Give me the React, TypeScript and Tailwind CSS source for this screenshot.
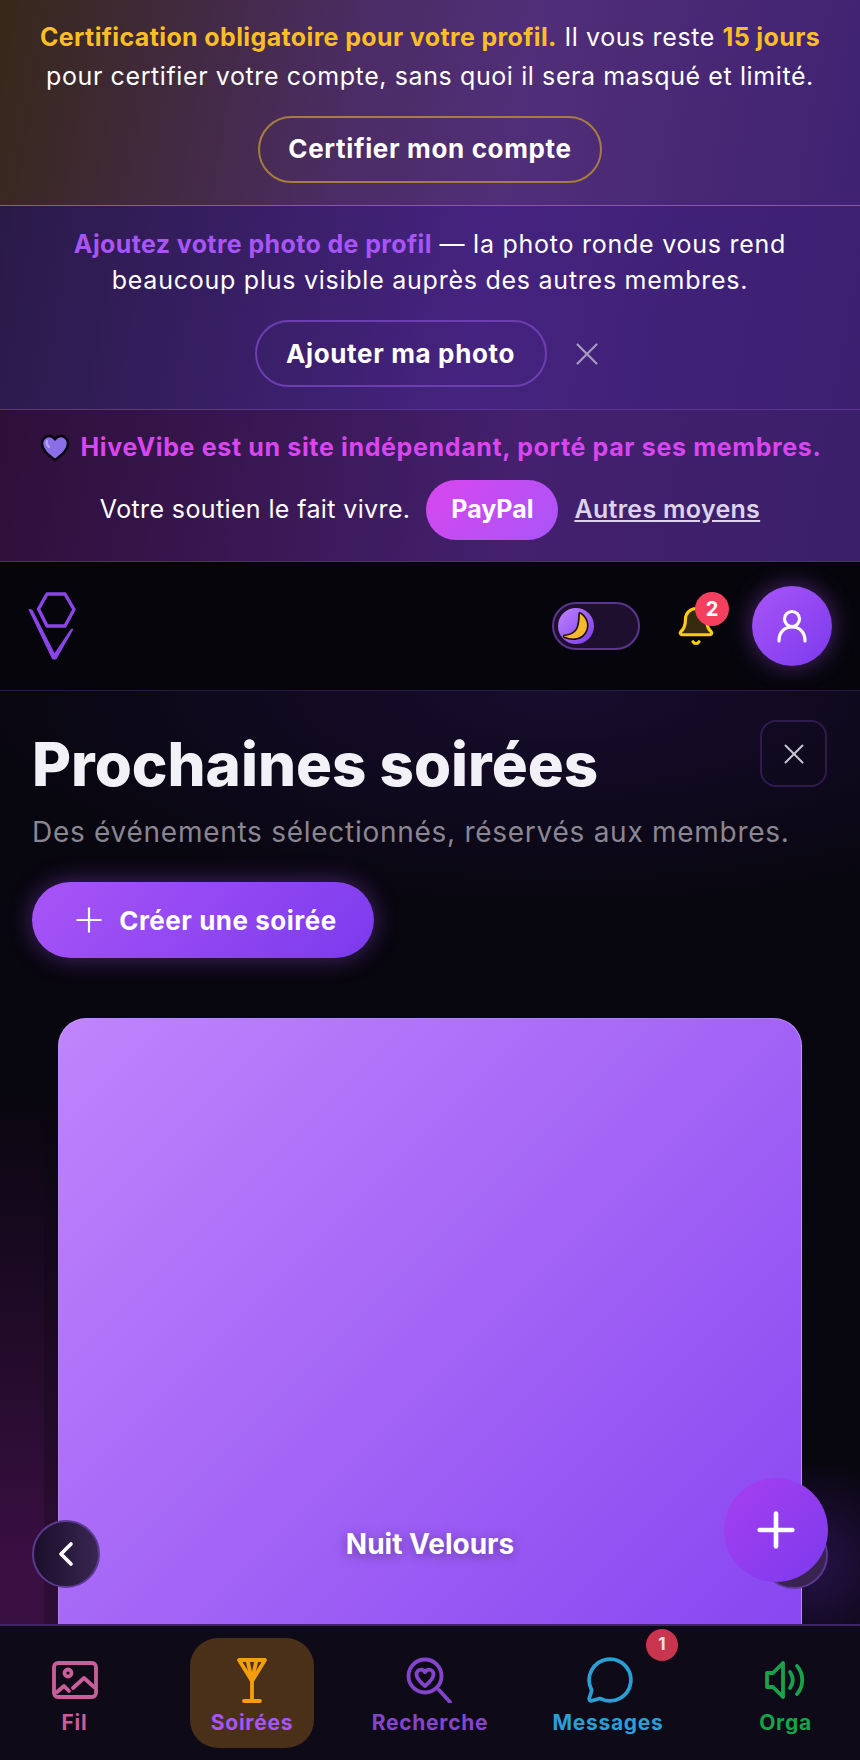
import { Bell, ChevronLeft, MessageCircle, Plus, X } from 'lucide-react';

const FONT = "font-['Inter',sans-serif]";

function Logo() {
  return (
    <svg width="52" height="72" viewBox="0 0 52 72" fill="none" aria-hidden="true">
      <path d="M10.500 19 19 4h18l9 15.500L37 36H19z" stroke="#8b45ea" strokeWidth="3.400" strokeLinejoin="round" />
      <path d="M1 19.500 4 20 26.500 64 43 39.500 45 39 28 69h-3.400z" fill="#8b45ea" stroke="#8b45ea" strokeLinejoin="round" />
    </svg>
  );
}

function Heart() {
  return (
    <svg width="30" height="28" viewBox="0 0 30 28" aria-hidden="true">
      <path
        d="M15 26C7 20 2 15.500 2 9.500 2 5 5.500 2 9 2c2.700 0 4.800 1.400 6 3.500C16.200 3.400 18.300 2 21 2c3.500 0 7 3 7 7.500 0 6-5 10.500-13 16.500z"
        fill="#8a6ee8"
        stroke="#0a0610"
        strokeWidth="2.500"
        strokeLinejoin="round"
      />
      <path d="M7 7c-1 2 0 4 2 6" stroke="#b7a5f5" strokeWidth="2.200" fill="none" strokeLinecap="round" />
    </svg>
  );
}

function Moon() {
  return (
    <svg width="30" height="30" viewBox="0 0 24 24" aria-hidden="true">
      <path
        d="M15.500 1.500c5.500 3.500 7.500 10 4.500 15.500-3 5.300-10 7.200-17.500 4-.8-.4-.5-1.400.4-1.600 4-.3 7.300-1.500 9.300-4.700 2-3.200 2.200-7.500 2.300-12.300.1-.9.500-1.200 1-.9z"
        fill="#f5b82e"
        stroke="#1a0e06"
        strokeWidth="1.300"
        strokeLinejoin="round"
      />
    </svg>
  );
}

function UserIcon() {
  return (
    <svg width="32" height="34" viewBox="0 0 32 34" fill="none" stroke="white" strokeWidth="3.200" strokeLinecap="round" aria-hidden="true">
      <circle cx="16" cy="10" r="7.500" />
      <path d="M3 32c0-9 5.500-14 13-14s13 5 13 14" />
    </svg>
  );
}

function PhotoIcon() {
  return (
    <svg width="46" height="38" viewBox="0 0 46 38" fill="none" stroke="#c85f9a" strokeWidth="3.800" strokeLinecap="round" strokeLinejoin="round" aria-hidden="true">
      <rect x="2" y="2" width="42" height="34" rx="4" />
      <circle cx="16" cy="12" r="3.500" />
      <path d="M5 31l7-6 5 5M21 27l11-10 10 9" />
    </svg>
  );
}

function GlassIcon() {
  return (
    <svg width="32" height="46" viewBox="0 0 32 46" fill="none" stroke="#f59e0b" strokeWidth="3.800" strokeLinecap="round" strokeLinejoin="round" aria-hidden="true">
      <path d="M3 3h26L16 24z" />
      <path d="M11.500 3 16 24l4.500-21M16 24v20M8 44h16" />
    </svg>
  );
}

function HeartSearchIcon() {
  return (
    <svg width="48" height="46" viewBox="0 0 48 46" fill="none" stroke="#8544cc" strokeWidth="3.800" strokeLinecap="round" strokeLinejoin="round" aria-hidden="true">
      <circle cx="19" cy="19" r="16.500" />
      <path d="M19 29c-5.500-4.500-8.500-7.500-8.500-11.500 0-3 2.200-4.800 4.500-4.800 1.800 0 3.100 1 4 2.400.9-1.400 2.200-2.400 4-2.400 2.300 0 4.500 1.800 4.500 4.800 0 4-3 7-8.500 11.500z" />
      <path d="M33 33l11 12" />
    </svg>
  );
}

function SpeakerIcon() {
  return (
    <svg width="44" height="38" viewBox="0 0 44 38" fill="none" stroke="#16a34a" strokeWidth="3.800" strokeLinecap="round" strokeLinejoin="round" aria-hidden="true">
      <path d="M19 2v34L9 26H3V12h6z" />
      <path d="M26 11c3.500 5 3.500 11 0 16" />
      <path d="M33 5c7 8 7 20 0 28" />
    </svg>
  );
}

type NavItem = { label: string; color: string; icon: React.ReactNode };

const NAV_ITEMS: NavItem[] = [
  { label: 'Fil', color: 'text-[#c85f9a]', icon: <PhotoIcon /> },
  { label: 'Soirées', color: 'text-[#a855f7]', icon: <GlassIcon /> },
  { label: 'Recherche', color: 'text-[#8544cc]', icon: <HeartSearchIcon /> },
  {
    label: 'Messages',
    color: 'text-[#2a9fd6]',
    icon: <MessageCircle size={50} strokeWidth={1.800} color="#2a9fd6" className="ml-[4px]" />,
  },
  { label: 'Orga', color: 'text-[#16a34a]', icon: <SpeakerIcon /> },
];

export default function App() {
  return (
    <div className={`relative flex h-[1760px] w-[860px] flex-col overflow-hidden bg-[#07060d] text-white ${FONT}`}>
      <section className="flex h-[206px] flex-col items-center border-b border-[#8f6a3e] bg-[linear-gradient(100deg,#372819_0%,#4c2c66_42%,#512e78_60%,#3f2272_100%)] pt-[18px] text-center text-[25px] leading-[38.500px] tracking-[0.024em]">
        <p>
          <strong className="font-bold tracking-[0.015em] text-[#fbbf24]">Certification obligatoire pour votre profil.</strong> Il vous reste{' '}
          <strong className="font-bold tracking-[0.015em] text-[#fbbf24]">15 jours</strong>
          <br />
          pour certifier votre compte, sans quoi il sera masqué et limité.
        </p>
        <button className="mt-[21px] h-[67px] w-[344px] rounded-full border-2 border-[#a67c3f] text-[26px] font-bold tracking-[0.025em]">
          Certifier mon compte
        </button>
      </section>

      <section className="flex h-[204px] flex-col items-center border-b border-[#5c3496] bg-[linear-gradient(100deg,#2a1a48_0%,#452380_55%,#3b2070_100%)] pt-[20px] text-center text-[25px] leading-[36px] tracking-[0.03em]">
        <p>
          <strong className="font-bold tracking-[0.015em] text-[#a855f7]">Ajoutez votre photo de profil</strong> — la photo ronde vous rend
          <br />
          beaucoup plus visible auprès des autres membres.
        </p>
        <div className="mt-[22px] flex items-center gap-[21px]">
          <button className="h-[67px] w-[292px] rounded-full border-2 border-[#6d3eb0] text-[26px] font-bold tracking-[0.025em]">
            Ajouter ma photo
          </button>
          <X size={38} strokeWidth={1.400} className="text-[#a79abf]" />
        </div>
      </section>

      <section className="flex h-[152px] flex-col items-center border-b border-[#5e2480] bg-[linear-gradient(100deg,#2e0f38_0%,#44206e_60%,#3a1f6a_100%)] pt-[19px] text-[25px]">
        <div className="flex items-center gap-[10px] pl-[2px]">
          <Heart />
          <span className="font-bold tracking-[0.026em] text-[#d946ef]">HiveVibe est un site indépendant, porté par ses membres.</span>
        </div>
        <div className="mt-[13px] flex items-center">
          <span className="tracking-[0.015em]">Votre soutien le fait vivre.</span>
          <button className="ml-[16px] h-[60px] w-[132px] rounded-full bg-[linear-gradient(135deg,#d946ef,#a855f7)] font-bold">PayPal</button>
          <a className="ml-[16px] font-semibold tracking-[0.012em] text-[#ddd3ea] underline">Autres moyens</a>
        </div>
      </section>

      <header className="flex h-[129px] items-center justify-between border-b border-[#2a1a48] bg-[#06050b] pl-[28px] pr-[28px]">
        <Logo />
        <div className="flex items-center">
          <div className="flex h-[48px] w-[88px] items-center rounded-full border-2 border-[#5b3490] bg-[#1f0f2e] pl-[4px]">
            <span className="flex h-[36px] w-[36px] items-center justify-center rounded-full bg-[linear-gradient(135deg,#c084fc,#7c3aed)]">
              <Moon />
            </span>
          </div>
          <div className="relative ml-[35px] mr-[35px]">
            <Bell size={42} strokeWidth={1.800} className="fill-[#fbbf24]/20 text-[#facc15]" />
            <span className="absolute left-[20px] top-[-13px] flex h-[34px] w-[34px] items-center justify-center rounded-full bg-[#f43f5e] text-[20px] font-bold">
              2
            </span>
          </div>
          <div className="flex h-[80px] w-[80px] items-center justify-center rounded-full bg-[linear-gradient(135deg,#a855f7,#7c3aed)] shadow-[0_0_24px_rgba(168,85,247,0.45)]">
            <UserIcon />
          </div>
        </div>
      </header>

      <main className="relative flex-1 overflow-hidden bg-[radial-gradient(ellipse_70%_220px_at_65%_0%,#170d2e_0%,#08060f_100%)]">
        <div className="absolute bottom-0 left-0 top-[400px] w-[58px] bg-[linear-gradient(180deg,transparent,#3a0f42_90%)]">
          <div className="ml-[44px] h-full w-[14px] bg-[#07060d]/25" />
        </div>
        <div className="absolute bottom-[-40px] right-0 h-[200px] w-[160px] bg-[radial-gradient(circle_at_70%_50%,#261248_0%,transparent_70%)]" />

        <div className="relative px-[32px] pt-[29px]">
          <button className="absolute right-[33px] top-[29px] flex h-[67px] w-[67px] items-center justify-center rounded-[16px] border-2 border-[#2f1b4d]">
            <X size={34} strokeWidth={1.400} className="text-[#c9c4d3]" />
          </button>
          <h1 className="text-[60px] font-extrabold leading-[88px] text-[#f3f1f8]">Prochaines soirées</h1>
          <p className="mt-[2px] text-[28px] leading-[44px] tracking-[0.026em] text-[#8a8692]">
            Des événements sélectionnés, réservés aux membres.
          </p>
          <button className="mt-[28px] flex h-[76px] w-[342px] items-center justify-center gap-[10px] rounded-full bg-[linear-gradient(135deg,#a855f7,#7c3aed)] text-[26px] font-bold tracking-[0.02em] shadow-[0_0_24px_rgba(168,85,247,0.4)]">
            <Plus size={40} strokeWidth={1.300} />
            Créer une soirée
          </button>
        </div>

        <div className="relative mx-[58px] mt-[60px] flex h-[680px] items-start justify-center rounded-[28px] border border-[#c9a5fb]/60 bg-[linear-gradient(135deg,#c084fc,#8543f0)] pt-[504px]">
          <span className="text-[28px] font-bold text-white [text-shadow:0_2px_12px_rgba(0,0,0,0.35)]">Nuit Velours</span>
        </div>

        <button className="absolute left-[32px] top-[829px] flex h-[68px] w-[68px] items-center justify-center rounded-full border-2 border-[#5b3a90] bg-[linear-gradient(90deg,#1a0e2a,#3a2652)]">
          <ChevronLeft size={40} strokeWidth={2.200} />
        </button>
        <div className="absolute right-[32px] top-[830px] h-[68px] w-[68px] rounded-full border-2 border-[#5b3a90] bg-[#3a2350]" />
      </main>

      <button className="absolute bottom-[178px] right-[32px] z-10 flex h-[104px] w-[104px] items-center justify-center rounded-full bg-[linear-gradient(135deg,#a63ff0,#7c3aed)]">
        <Plus size={56} strokeWidth={2} />
      </button>

      <nav className="relative grid h-[136px] grid-cols-[149px_206px_150px_206px_149px] border-t-2 border-[#3f2370] bg-[#0e0a18] pt-[12px]">
        {NAV_ITEMS.map((item, i) => (
          <div key={item.label} className="flex justify-center">
            <div className={`flex h-[110px] w-[124px] flex-col items-center rounded-[28px] ${i === 1 ? 'bg-[#4a3018]' : ''}`}>
              <div className="mt-[14px] flex h-[56px] items-center justify-center">{item.icon}</div>
              <span className={`mt-[1px] whitespace-nowrap text-[21px] font-bold leading-[28px] tracking-[0.035em] ${item.color}`}>{item.label}</span>
            </div>
          </div>
        ))}
        <span className="absolute left-[646px] top-[3px] flex h-[32px] w-[32px] items-center justify-center rounded-full bg-[#c9344f] text-[17px] font-bold text-[#e8e2e6]">
          1
        </span>
      </nav>
    </div>
  );
}
